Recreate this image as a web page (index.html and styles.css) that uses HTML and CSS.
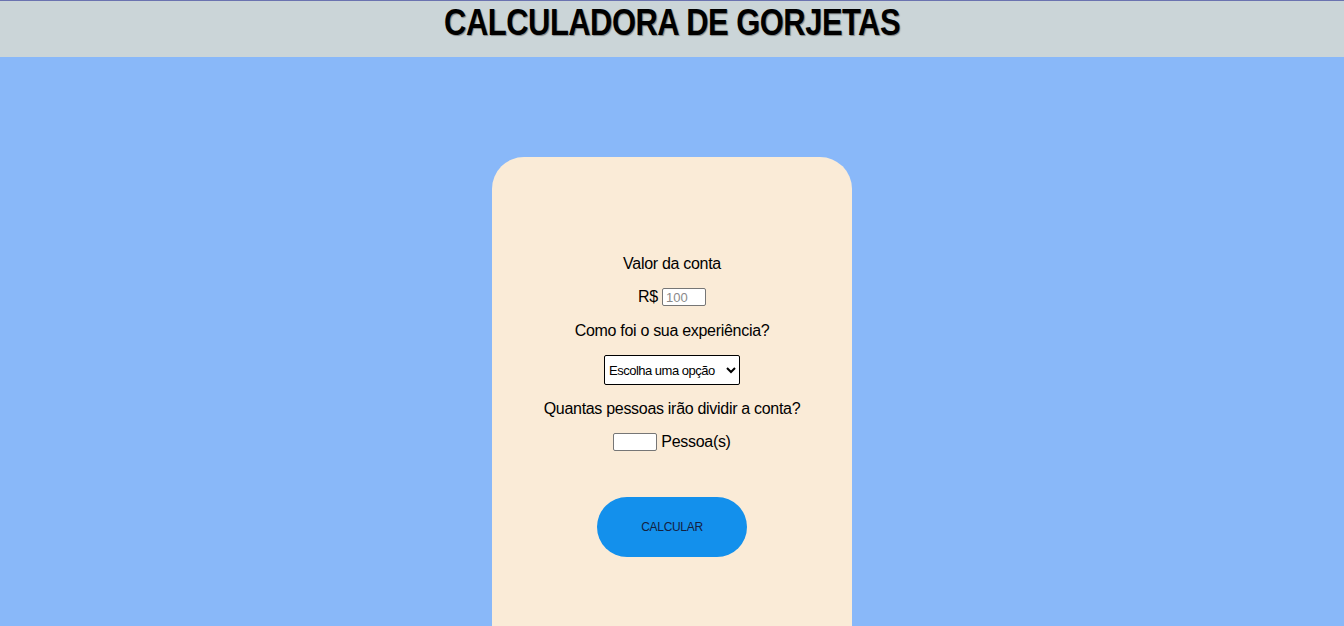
FILE: index.html
```html
<!DOCTYPE html>
<html lang="pt-BR">
<head>
<meta charset="utf-8">
<title>Calculadora de Gorjetas</title>
<link rel="stylesheet" href="styles.css">
</head>
<body>
<header class="topbar">
  <h1 class="title">CALCULADORA DE GORJETAS</h1>
</header>
<main class="stage">
  <section class="card">
    <p class="label">Valor da conta</p>
    <div class="row"><span class="label">R$</span><input class="field money" type="text" placeholder="100"></div>
    <p class="label">Como foi o sua experiência?</p>
    <select class="choice">
      <option>Escolha uma opção</option>
    </select>
    <p class="label">Quantas pessoas irão dividir a conta?</p>
    <div class="row"><input class="field people" type="text"><span class="label">Pessoa(s)</span></div>
    <button class="calc" type="button">CALCULAR</button>
  </section>
</main>
</body>
</html>
```

FILE: styles.css
```css
* { box-sizing: border-box; }
html, body { margin: 0; padding: 0; height: 100%; }
body {
  background: #89b8f9;
  font-family: "Liberation Sans", Arial, sans-serif;
  color: #000;
  overflow: hidden;
  border-top: 1px solid #6b73b0;
}
.topbar {
  height: 56px;
  background: #cbd5d8;
  display: flex;
  justify-content: center;
}
.title {
  margin: 0;
  font-size: 36px;
  line-height: 44px;
  font-weight: 700;
  letter-spacing: -0.6px;
  transform: scaleX(0.86);
  text-shadow: 1px 1px 1px rgba(80, 80, 80, 0.6);
}
.stage {
  display: flex;
  justify-content: center;
  padding-top: 100px;
}
.card {
  width: 360px;
  height: 600px;
  background: #faebd7;
  border-radius: 32px;
  padding-top: 98px;
  display: flex;
  flex-direction: column;
  align-items: center;
}
.label {
  margin: 0;
  font-size: 16px;
  line-height: 18px;
  letter-spacing: -0.3px;
}
.card > .row { margin-top: 15px; display: flex; align-items: center; gap: 4px; }
.card > .row + .label { margin-top: 16px; }
.field {
  height: 18px;
  width: 44px;
  border: 1px solid #767676;
  border-radius: 2px;
  background: #fff;
  font-family: "Liberation Sans", Arial, sans-serif;
  font-size: 13px;
  padding: 0 3px;
}
.field::placeholder { color: #8a8a8a; }
.choice {
  margin-top: 15px;
  width: 136px;
  height: 30px;
  border: 1px solid #000;
  border-radius: 2px;
  background: #fff;
  font-family: "Liberation Sans", Arial, sans-serif;
  font-size: 13px;
  letter-spacing: -0.5px;
  padding: 0;
  color: #000;
}
.choice + .label { margin-top: 15px; }
.calc {
  margin-top: 46px;
  width: 150px;
  height: 60px;
  border: none;
  border-radius: 30px;
  background: #1390ec;
  color: #13213f;
  font-family: "Liberation Sans", Arial, sans-serif;
  font-size: 12px;
  letter-spacing: -0.3px;
}
```
